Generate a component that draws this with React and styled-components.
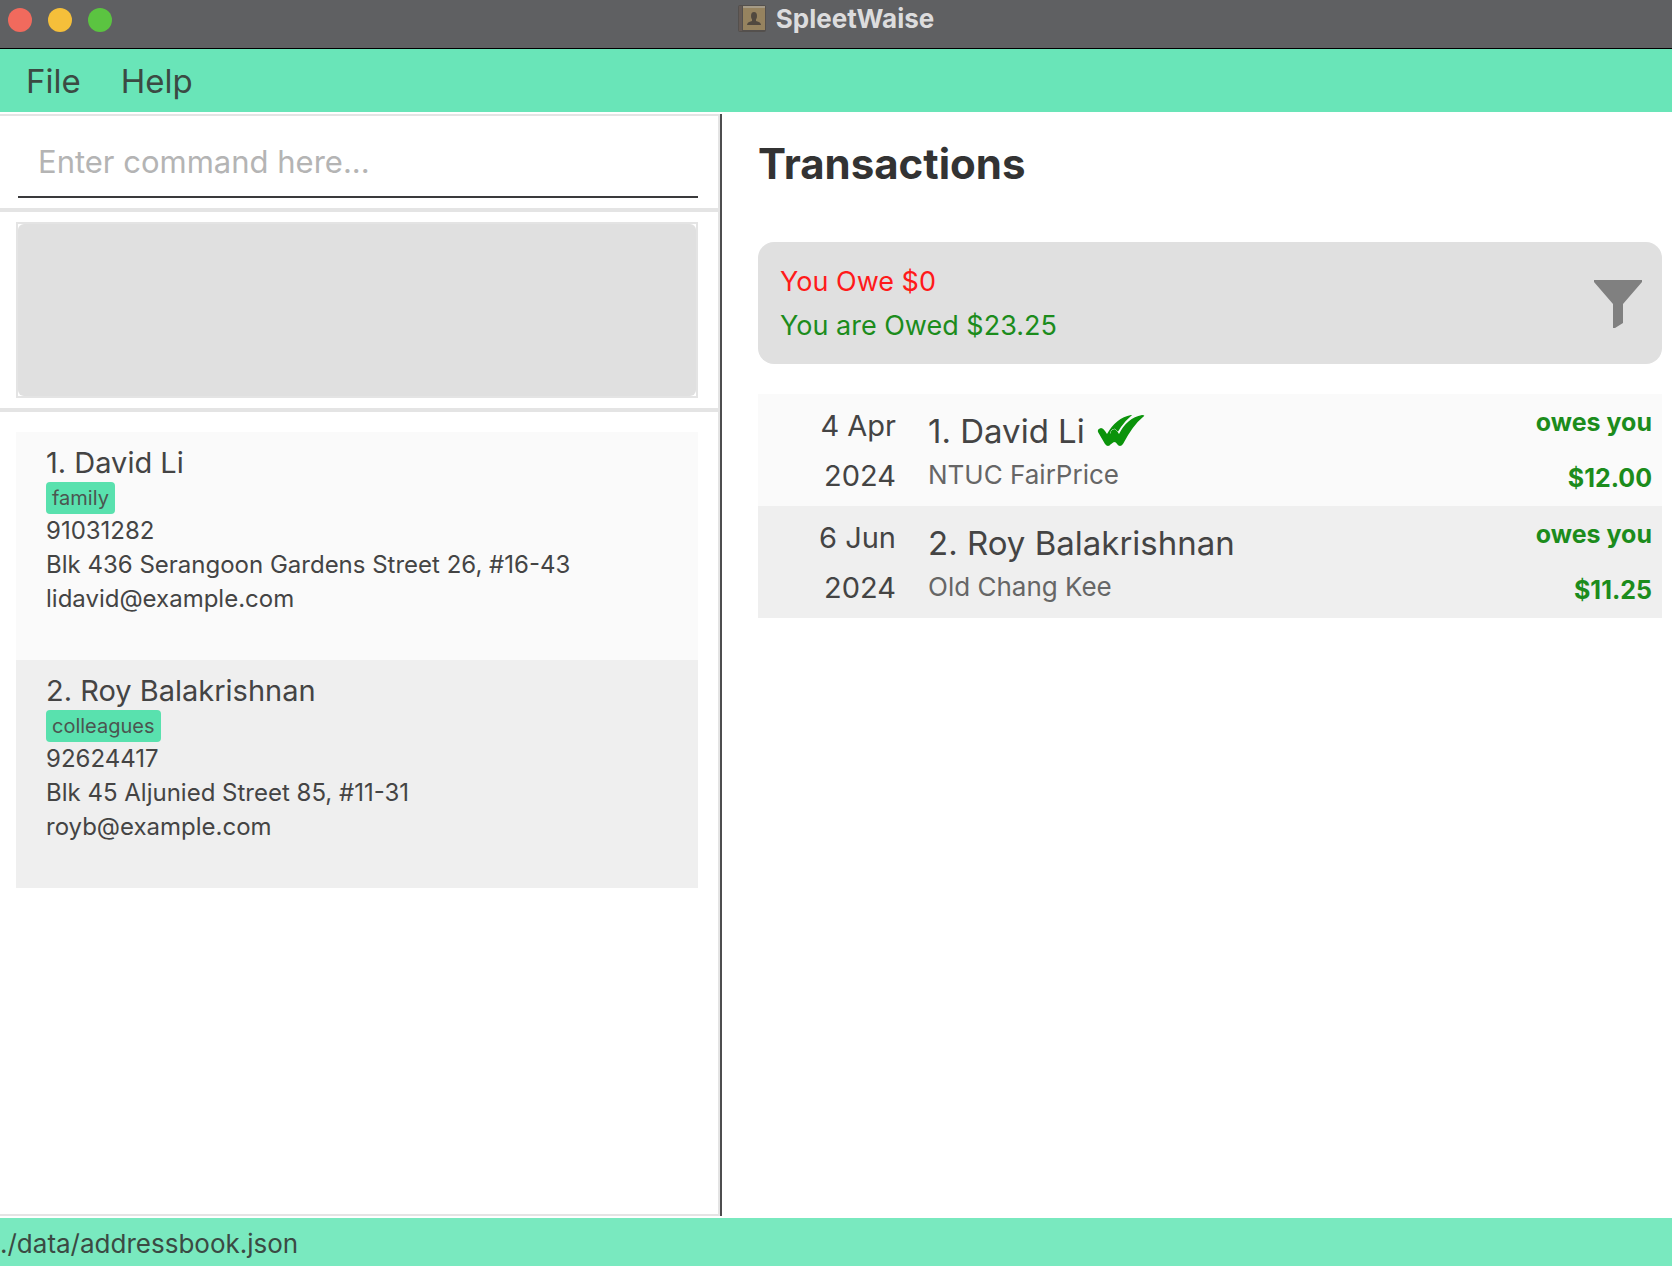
import React from "react";
import styled, { createGlobalStyle } from "styled-components";

const GlobalStyle = createGlobalStyle`
  *, *::before, *::after { box-sizing: border-box; }
  body { margin: 0; background: #fff; color: #444; font-family: Inter, "Liberation Sans", sans-serif; }
  h1, h2, h3, p, ul { margin: 0; padding: 0; font-weight: 400; }
  ul { list-style: none; }
`;

const Window = styled.div`
  display: flex;
  flex-direction: column;
  min-height: 100vh;
`;

const TitleBar = styled.header`
  display: grid;
  grid-template-columns: 1fr auto 1fr;
  align-items: start;
  height: 49px;
  padding: 0 8px;
  background: #5f6062;
  border-bottom: 1px solid #000;
`;

const Lights = styled.div`
  display: flex;
  gap: 16px;
  padding-top: 8px;
`;

const Light = styled.button`
  width: 24px;
  height: 24px;
  padding: 0;
  border: 0;
  border-radius: 50%;
  background: ${(p) => p.$color};
`;

const AppName = styled.h1`
  display: flex;
  align-items: center;
  gap: 10px;
  height: 37px;
  color: #dcdcdd;
  font-size: 26px;
  line-height: 38px;
  && { font-weight: 700; }
`;

const MenuBar = styled.nav`
  display: flex;
  gap: 40px;
  height: 63px;
  padding: 0 26px;
  background: #69e5b8;
`;

const MenuButton = styled.button`
  padding: 0;
  border: 0;
  background: none;
  color: #3b4a43;
  font: 400 33px/62px Inter, sans-serif;
`;

const Body = styled.main`
  display: grid;
  grid-template-columns: 722fr 950fr;
  flex: 1;
  padding: 2px 0;
`;

const LeftPane = styled.div`
  display: flex;
  flex-direction: column;
  border-right: 2px solid #4d4d4f;
`;

const Section = styled.section`
  flex: ${(p) => (p.$grow ? 1 : "none")};
  padding: ${(p) => p.$padding};
  border: solid #e4e4e4;
  border-width: 2px 2px 2px 0;
`;

const CommandInput = styled.input`
  display: block;
  width: 100%;
  height: 72px;
  padding: 0 20px;
  border: 0;
  border-bottom: 2px solid #3a3a3c;
  background: none;
  color: #444;
  font: 400 31px/40px Inter, sans-serif;
  outline: 0;
  &::placeholder { color: #b4b4b4; opacity: 1; }
`;

const ResultFrame = styled.div`
  height: 176px;
  border: 2px solid #e4e4e4;
`;

const Result = styled.output`
  display: block;
  height: 100%;
  border-radius: 6px;
  background: #e0e0e0;
`;

const Person = styled.li`
  height: 228px;
  padding: 12px 30px;
  font-size: 24px;
  line-height: 34px;
  background: #fafafa;
  &:nth-child(even) { background: #efefef; }
`;

const PersonName = styled.h2`
  font-size: 29px;
  line-height: 38px;
`;

const Tag = styled.span`
  display: block;
  width: fit-content;
  height: 32px;
  padding: 0 6px;
  border-radius: 4px;
  background: #59e1ae;
  color: #4b5550;
  font-size: 20px;
  line-height: 33px;
`;

const RightPane = styled.section`
  padding: 24px 10px 24px 36px;
`;

const Heading = styled.h2`
  color: #333;
  font-size: 42px;
  line-height: 52px;
  && { font-weight: 700; }
`;

const Summary = styled.div`
  display: flex;
  align-items: center;
  justify-content: space-between;
  margin: 52px 0 30px;
  padding: 18px 20px 16px 22px;
  border-radius: 16px;
  background: #e0e0e0;
`;

const Total = styled.p`
  color: ${(p) => p.$color};
  font-size: 27px;
  line-height: 44px;
`;

const FilterButton = styled.button`
  display: flex;
  padding: 0;
  border: 0;
  background: none;
`;

const Transaction = styled.li`
  display: grid;
  grid-template-columns: 138px 1fr auto;
  column-gap: 32px;
  height: 112px;
  padding-right: 10px;
  background: #fafafa;
  &:nth-child(even) { background: #efefef; }
`;

const DateText = styled.time`
  padding: 7px 0;
  text-align: right;
  font-size: 29px;
  line-height: 50px;
`;

const Details = styled.div`
  padding-top: 15px;
`;

const PayeeName = styled.h3`
  display: flex;
  align-items: center;
  gap: 12px;
  font-size: 33px;
  line-height: 44px;
`;

const Note = styled.p`
  color: #666;
  font-size: 26px;
  line-height: 44px;
`;

const Amount = styled.p`
  display: flex;
  flex-direction: column;
  text-align: right;
  color: #1c8c1c;
  font-size: 25px;
  line-height: 56px;
  && { font-weight: 700; }
`;

const StatusBar = styled.footer`
  height: 48px;
  background: #79e9bf;
  color: #3b4a43;
  font-size: 26px;
  line-height: 52px;
`;

const people = [
  { name: "David Li", tag: "family", phone: "91031282", address: "Blk 436 Serangoon Gardens Street 26, #16-43", email: "lidavid@example.com" },
  { name: "Roy Balakrishnan", tag: "colleagues", phone: "92624417", address: "Blk 45 Aljunied Street 85, #11-31", email: "royb@example.com" },
];

const transactions = [
  { name: "David Li", day: "4 Apr", date: "2024-04-04", note: "NTUC FairPrice", amount: "$12.00", done: true },
  { name: "Roy Balakrishnan", day: "6 Jun", date: "2024-06-06", note: "Old Chang Kee", amount: "$11.25", done: false },
];

const BookIcon = () => (
  <svg width="28" height="27" viewBox="0 0 28 27" aria-hidden="true">
    <rect width="28" height="27" rx="2" fill="#54504d" />
    <rect x="1" y="1" width="3" height="25" fill="#655b56" />
    <rect x="5" y="1" width="22" height="24" fill="#96835f" />
    <rect x="5" y="1" width="22" height="2" fill="#a59b87" />
    <ellipse cx="16" cy="11" rx="3" ry="4" fill="#51493f" />
    <path d="M14 12h4v4q5 1 5 4H9q0-3 5-4z" fill="#51493f" />
  </svg>
);

const DoneIcon = () => (
  <svg width="48" height="34" viewBox="0 0 48 34" role="img" aria-label="Done">
    <g fill="#0b930b">
      <path d="M1 18q-1-3 3-4 2 0 4 3l2 3Q19 4 34 1q2 0 0 1Q24 10 14 30q-3 4-6 0z" />
      <path d="M15 16q3-2 5 1l2 3Q30 4 45 1q4 0 1 2Q36 11 26 30q-3 4-6 0l-6-9q-1-3 1-5z" stroke="#fafafa" strokeWidth="1" paintOrder="stroke" />
      <path d="M10 23l6-6 5 12-4-1-3 2z" />
    </g>
  </svg>
);

const FunnelIcon = () => (
  <svg width="48" height="48" viewBox="0 0 48 48" aria-hidden="true">
    <path d="M0 0h48v2L29 24v19l-8 5h-2V24L0 2z" fill="#808080" />
  </svg>
);

export default function App() {
  return (
    <Window>
      <GlobalStyle />
      <TitleBar>
        <Lights>
          <Light $color="#f16a5d" aria-label="Close" />
          <Light $color="#f5bf3a" aria-label="Minimise" />
          <Light $color="#5bc441" aria-label="Zoom" />
        </Lights>
        <AppName><BookIcon />SpleetWaise</AppName>
      </TitleBar>
      <MenuBar>
        <MenuButton>File</MenuButton>
        <MenuButton>Help</MenuButton>
      </MenuBar>
      <Body>
        <LeftPane>
          <Section $padding="10px 20px 10px 18px">
            <CommandInput aria-label="Command" placeholder="Enter command here..." />
          </Section>
          <Section $padding="10px 20px 10px 16px">
            <ResultFrame><Result /></ResultFrame>
          </Section>
          <Section $grow $padding="20px 20px 20px 16px">
            <ul>
              {people.map((person, i) => (
                <Person key={person.name}>
                  <PersonName>{i + 1}. {person.name}</PersonName>
                  <Tag>{person.tag}</Tag>
                  <p>{person.phone}</p>
                  <p>{person.address}</p>
                  <p>{person.email}</p>
                </Person>
              ))}
            </ul>
          </Section>
        </LeftPane>
        <RightPane>
          <Heading>Transactions</Heading>
          <Summary>
            <div>
              <Total $color="#ff1a1a">You Owe $0</Total>
              <Total $color="#1c8c1c">You are Owed $23.25</Total>
            </div>
            <FilterButton aria-label="Filter"><FunnelIcon /></FilterButton>
          </Summary>
          <ul>
            {transactions.map((t, i) => (
              <Transaction key={t.name}>
                <DateText dateTime={t.date}>{t.day}<br />2024</DateText>
                <Details>
                  <PayeeName>{i + 1}. {t.name}{t.done && <DoneIcon />}</PayeeName>
                  <Note>{t.note}</Note>
                </Details>
                <Amount><span>owes you</span><span>{t.amount}</span></Amount>
              </Transaction>
            ))}
          </ul>
        </RightPane>
      </Body>
      <StatusBar>./data/addressbook.json</StatusBar>
    </Window>
  );
}
